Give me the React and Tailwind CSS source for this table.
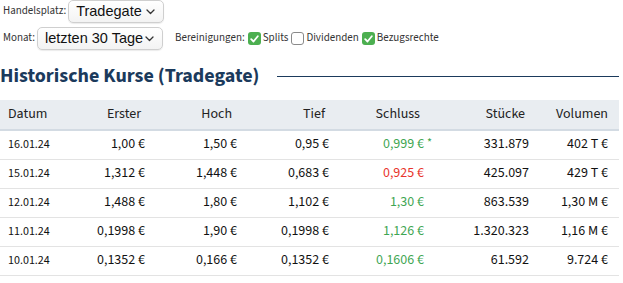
import React from 'react';

const rows = [
  { datum: '16.01.24', erster: '1,00 €', hoch: '1,50 €', tief: '0,95 €', schluss: '0,999 €', trend: 'up', star: true, stuecke: '331.879', volumen: '402 T €' },
  { datum: '15.01.24', erster: '1,312 €', hoch: '1,448 €', tief: '0,683 €', schluss: '0,925 €', trend: 'down', stuecke: '425.097', volumen: '429 T €' },
  { datum: '12.01.24', erster: '1,488 €', hoch: '1,80 €', tief: '1,102 €', schluss: '1,30 €', trend: 'up', stuecke: '863.539', volumen: '1,30 M €' },
  { datum: '11.01.24', erster: '0,1998 €', hoch: '1,90 €', tief: '0,1998 €', schluss: '1,126 €', trend: 'up', stuecke: '1.320.323', volumen: '1,16 M €' },
  { datum: '10.01.24', erster: '0,1352 €', hoch: '0,166 €', tief: '0,1352 €', schluss: '0,1606 €', trend: 'up', stuecke: '61.592', volumen: '9.724 €' },
];

const Chevron = () => (
  <svg width="9" height="6" viewBox="0 0 9 6" className="ml-auto">
    <path d="M1 1l3.5 3.5L8 1" fill="none" stroke="#333" strokeWidth="1.3" strokeLinecap="round" strokeLinejoin="round" />
  </svg>
);

const Select = ({ label, className }) => (
  <div
    className={`flex items-center h-[23px] pl-[7px] pr-[8px] rounded-[5px] border border-[#cfcfcf] bg-gradient-to-b from-white to-[#f3f3f3] shadow-[0_1px_1px_rgba(0,0,0,0.08)] ${className}`}
  >
    <span className="text-[14.5px] text-[#111] leading-none" style={{ fontFamily: '"Liberation Sans", Arial, sans-serif' }}>
      {label}
    </span>
    <Chevron />
  </div>
);

const Check = ({ checked }) =>
  checked ? (
    <span className="inline-flex items-center justify-center w-[13px] h-[13px] rounded-[3px] bg-[#4caf50]">
      <svg width="9" height="8" viewBox="0 0 9 8">
        <path d="M1.2 4.2l2.3 2.3L7.8 1.3" fill="none" stroke="white" strokeWidth="1.8" strokeLinecap="round" strokeLinejoin="round" />
      </svg>
    </span>
  ) : (
    <span className="inline-block w-[13px] h-[13px] rounded-[3px] border border-[#8a8a8a] bg-white" />
  );

const App = () => {
  return (
    <div className="w-[623px] h-[283px] bg-white overflow-hidden text-[#222]" style={{ fontFamily: '"Source Sans Pro", "Source Sans 3", Lato, sans-serif' }}>
      {/* Controls */}
      <div className="flex items-center h-[23px]">
        <span className="ml-[3px] mr-[2px] text-[11px] text-[#333]">Handelsplatz:</span>
        <Select label="Tradegate" className="w-[96px]" />
      </div>
      <div className="flex items-center h-[23px] mt-[4px]">
        <span className="ml-[3px] mr-[2px] text-[11px] text-[#333]">Monat:</span>
        <Select label="letzten 30 Tage" className="w-[126px]" />
        <span className="ml-[12px] text-[11px] text-[#333]">Bereinigungen:</span>
        <span className="ml-[3px] flex"><Check checked /></span>
        <span className="ml-[2px] text-[11px] text-[#333]">Splits</span>
        <span className="ml-[3px] flex"><Check /></span>
        <span className="ml-[2px] text-[11px] text-[#333]">Dividenden</span>
        <span className="ml-[3px] flex"><Check checked /></span>
        <span className="ml-[2px] text-[11px] text-[#333]">Bezugsrechte</span>
      </div>

      {/* Heading */}
      <div className="flex items-center mt-[12px] h-[28px]">
        <h2 className="text-[20px] font-bold text-[#1b3a5c] whitespace-nowrap">Historische Kurse (Tradegate)</h2>
        <div className="flex-1 ml-[17px] mr-[4px] h-px bg-[#1b3a5c]" />
      </div>

      {/* Table */}
      <table className="mt-[10px] w-[619px] border-collapse table-fixed">
        <colgroup>
          <col className="w-[60px]" />
          <col className="w-[89px]" />
          <col className="w-[92px]" />
          <col className="w-[92px]" />
          <col className="w-[95px]" />
          <col className="w-[105px]" />
          <col className="w-[86px]" />
        </colgroup>
        <thead>
          <tr className="bg-[#e9edf1] h-[30px] border-b-2 border-[#d3dbe3] text-[14px] text-[#222]">
            <th className="text-left font-normal pl-[8px]">Datum</th>
            <th className="text-right font-normal pr-[8px]">Erster</th>
            <th className="text-right font-normal pr-[9px]">Hoch</th>
            <th className="text-right font-normal pr-[8px]">Tief</th>
            <th className="text-right font-normal pr-[8px]">Schluss</th>
            <th className="text-right font-normal pr-[8px]">Stücke</th>
            <th className="text-right font-normal pr-[11px]">Volumen</th>
          </tr>
        </thead>
        <tbody>
          {rows.map((r) => (
            <tr key={r.datum} className="h-[29px] border-b border-[#e3e3e3] text-[14px] text-[#111]">
              <td className="pl-[8px] text-[12px]">{r.datum}</td>
              <td className="text-right pr-[4px]">{r.erster}</td>
              <td className="text-right pr-[4px]">{r.hoch}</td>
              <td className="text-right pr-[4px]">{r.tief}</td>
              <td className={`text-right pr-[4px] ${r.trend === 'up' ? 'text-[#3fa653]' : 'text-[#e8342b]'}`}>
                <span className="relative">
                  {r.schluss}
                  {r.star && <span className="absolute left-full top-[0px] ml-[3px] text-[12px]">*</span>}
                </span>
              </td>
              <td className="text-right pr-[4px]">{r.stuecke}</td>
              <td className="text-right pr-[11px]">{r.volumen}</td>
            </tr>
          ))}
        </tbody>
      </table>
    </div>
  );
};

export default App;
